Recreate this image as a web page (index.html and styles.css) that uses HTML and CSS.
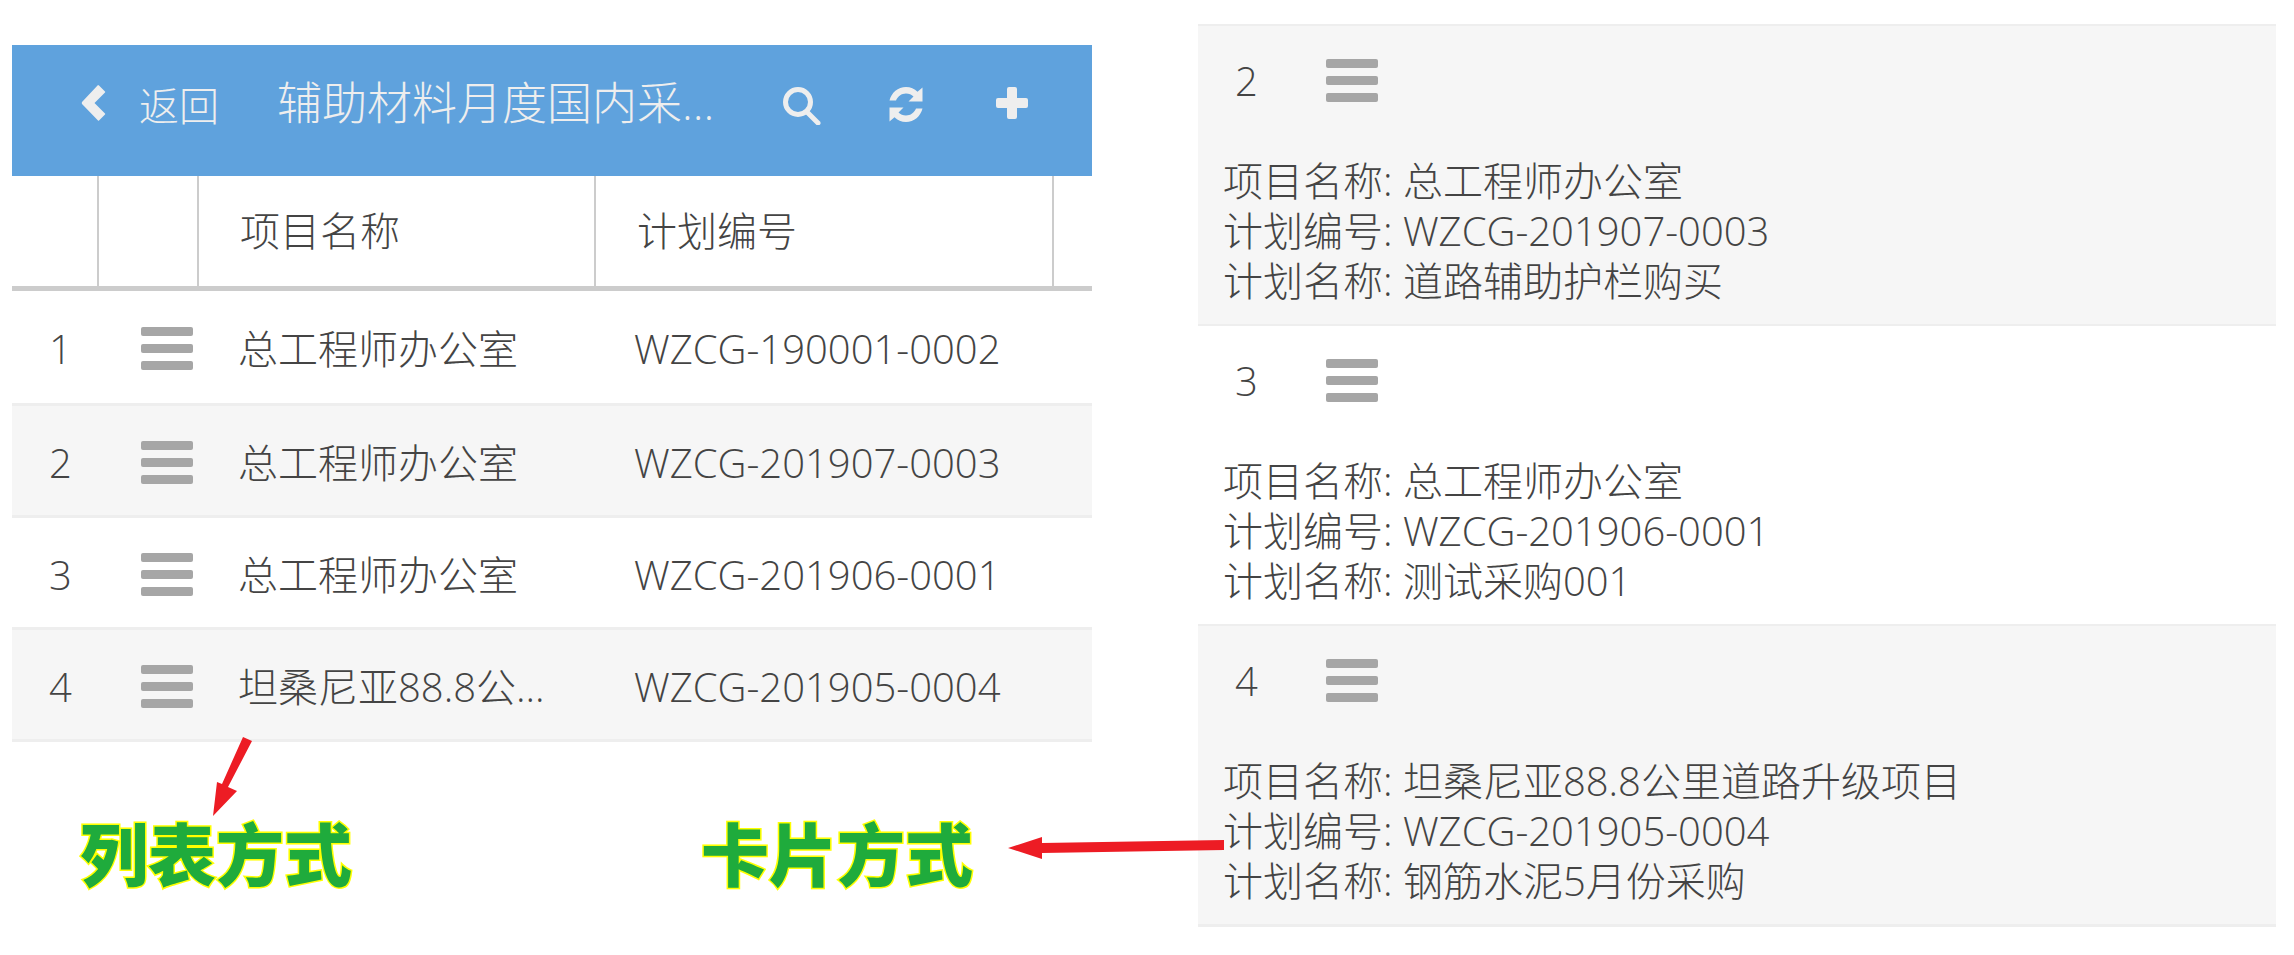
FILE: index.html
```html
<!DOCTYPE html>
<html lang="zh-CN">
<head>
    <meta charset="UTF-8">
    <title>列表方式 卡片方式</title>
    <link rel="stylesheet" href="styles.css">
</head>
<body>

    <div class="page">
        <div class="list-side">
            <div class="top-bar">
                <svg class="icon back-icon" viewBox="0 0 24 36"><path d="M16.5 0 Q17 0 17.5 0.5 L23.5 6.5 Q24 7 23.5 7.5 L13 18 L23.5 28.5 Q24 29 23.5 29.5 L17.5 35.5 Q17 36 16.5 35.5 L0.5 19 Q0 18 0.5 17 Z"/></svg>
                <span class="back-text">返回</span>
                <span class="title">辅助材料月度国内采...</span>
                <svg class="icon search-icon" viewBox="0 0 38 38"><circle cx="15" cy="15" r="12.5"/><path d="M24 25 L35 36"/></svg>
                <svg class="icon refresh-icon" viewBox="0 0 34 35"><path d="M17 0 C21.5 0 25.5 1.8 28.5 4.7 L33.5 0.5 V14.5 H19.5 L24.5 9.5 C22.5 7.6 20 6.5 17 6.5 C12.5 6.5 8.7 9.3 7 13.5 H0.5 C2.3 5.8 9 0 17 0 Z"/><path d="M17 35 C12.5 35 8.5 33.2 5.5 30.3 L0.5 34.5 V20.5 H14.5 L9.5 25.5 C11.5 27.4 14 28.5 17 28.5 C21.5 28.5 25.3 25.7 27 21.5 H33.5 C31.7 29.2 25 35 17 35 Z"/></svg>
                <svg class="icon plus-icon" viewBox="0 0 32 32"><path d="M11 2 Q11 0 13 0 H19 Q21 0 21 2 V11 H30 Q32 11 32 13 V19 Q32 21 30 21 H21 V30 Q21 32 19 32 H13 Q11 32 11 30 V21 H2 Q0 21 0 19 V13 Q0 11 2 11 H11 Z"/></svg>
            </div>

            <div class="table-head">
                <div class="col-num"></div>
                <div class="col-menu"></div>
                <div class="col-name">项目名称</div>
                <div class="col-code">计划编号</div>
                <div class="col-rest"></div>
            </div>

            <div class="row">
                <div class="num">1</div>
                <div class="menu"><i></i><i></i><i></i></div>
                <div class="name">总工程师办公室</div>
                <div class="code">WZCG-190001-0002</div>
            </div>
            <div class="row even">
                <div class="num">2</div>
                <div class="menu"><i></i><i></i><i></i></div>
                <div class="name">总工程师办公室</div>
                <div class="code">WZCG-201907-0003</div>
            </div>
            <div class="row">
                <div class="num">3</div>
                <div class="menu"><i></i><i></i><i></i></div>
                <div class="name">总工程师办公室</div>
                <div class="code">WZCG-201906-0001</div>
            </div>
            <div class="row even">
                <div class="num">4</div>
                <div class="menu"><i></i><i></i><i></i></div>
                <div class="name">坦桑尼亚88.8公...</div>
                <div class="code">WZCG-201905-0004</div>
            </div>

            <div class="labels">
                <span class="label">列表方式</span>
                <span class="label">卡片方式</span>
            </div>
        </div>

        <div class="card-side">
            <div class="card even">
                <div class="card-top">
                    <div class="card-num">2</div>
                    <div class="menu"><i></i><i></i><i></i></div>
                </div>
                <p>项目名称: 总工程师办公室</p>
                <p>计划编号: WZCG-201907-0003</p>
                <p>计划名称: 道路辅助护栏购买</p>
            </div>
            <div class="card">
                <div class="card-top">
                    <div class="card-num">3</div>
                    <div class="menu"><i></i><i></i><i></i></div>
                </div>
                <p>项目名称: 总工程师办公室</p>
                <p>计划编号: WZCG-201906-0001</p>
                <p>计划名称: 测试采购001</p>
            </div>
            <div class="card even">
                <div class="card-top">
                    <div class="card-num">4</div>
                    <div class="menu"><i></i><i></i><i></i></div>
                </div>
                <p>项目名称: 坦桑尼亚88.8公里道路升级项目</p>
                <p>计划编号: WZCG-201905-0004</p>
                <p>计划名称: 钢筋水泥5月份采购</p>
            </div>
        </div>

        <!-- red arrows drawn over the shot -->
        <svg class="arrows" width="2294" height="955" viewBox="0 0 2294 955">
            <polygon points="243,737 252,741 228,787 237,791 213,816 217,782 222,784"/>
            <polygon points="1224,840 1224,850 1042,853 1042,859 1008,848 1042,837 1042,843"/>
        </svg>
    </div>

</body>
</html>
```

FILE: styles.css
```css
body {
    margin: 0;
    background-color: #fff;
    font-family: "Open Sans", "Noto Sans CJK SC", sans-serif;
    font-weight: 300;
    font-size: 40px;
    color: #444;
}

.page {
    display: flex;
    width: 2294px;
    height: 955px;
    overflow: hidden;
}

/* left: list */
.list-side {
    width: 1080px;
    margin: 45px 0 0 12px;
}

.top-bar {
    display: flex;
    align-items: flex-start;
    height: 131px;
    background-color: #5fa2dd;
    color: #eee;
}

.icon {
    fill: #eee;
    flex: none;
}

.back-icon {
    width: 25px;
    height: 36px;
    margin: 40px 0 0 69px;
}

.back-text {
    margin: 36px 0 0 33px;
    line-height: 50px;
}

.title {
    margin: 30px 0 0 58px;
    font-size: 45px;
    line-height: 56px;
    width: 506px;
    white-space: nowrap;
}

.search-icon {
    width: 38px;
    height: 38px;
    margin: 42px 0 0 0;
    fill: none;
    stroke: #eee;
    stroke-width: 5;
    stroke-linecap: round;
}

.refresh-icon {
    width: 34px;
    height: 35px;
    margin: 42px 0 0 68px;
}

.plus-icon {
    width: 32px;
    height: 32px;
    margin: 42px 0 0 73px;
}

.table-head {
    display: flex;
    height: 110px;
    border-bottom: 5px solid #ccc;
}

.table-head div {
    display: flex;
    align-items: center;
    border-right: 2px solid #ccc;
    box-sizing: border-box;
    padding-bottom: 4px;
}

.col-num { width: 87px; }
.col-menu { width: 100px; }
.col-name { width: 397px; padding-left: 41px; }
.col-code { width: 458px; padding-left: 41px; }
.table-head .col-rest { flex: 1; border-right: none; }

.row {
    display: flex;
    align-items: center;
    height: 106px;
    padding-top: 3px;
    border-bottom: 3px solid #eee;
}

.table-head + .row {
    height: 110px;
    padding-top: 2px;
}

.row.even,
.card.even {
    background-color: #f6f6f6;
}

.num {
    width: 87px;
    padding-left: 37px;
    box-sizing: border-box;
}

.menu {
    display: flex;
    flex-direction: column;
    gap: 8px;
    width: 52px;
    flex: none;
}

.menu i {
    display: block;
    height: 9px;
    border-radius: 2px;
    background-color: #a6a6a6;
}

.row .menu {
    margin-left: 42px;
}

.name {
    width: 400px;
    padding: 0 0 2px 45px;
    box-sizing: border-box;
    white-space: nowrap;
}

.code {
    padding: 1px 0 0 41px;
    white-space: nowrap;
}

.labels {
    display: flex;
    gap: 341px;
    margin: 70px 0 0 68px;
}

.label {
    width: 280px;
    white-space: nowrap;
    font-family: "Noto Sans CJK SC", sans-serif;
    font-weight: 900;
    font-size: 68px;
    line-height: 80px;
    color: #1fab3c;
    -webkit-text-stroke: 3px #ff0;
    paint-order: stroke fill;
}

/* right: cards */
.card-side {
    width: 1078px;
    margin: 24px 0 0 106px;
}

.card {
    height: 298px;
    padding-left: 25px;
    border-top: 2px solid #eee;
}

.card:last-child {
    border-bottom: 3px solid #eee;
}

.card-top {
    display: flex;
    align-items: center;
    height: 44px;
    padding: 32px 0 0 1px;
    margin-bottom: 54px;
}

.card-num {
    width: 102px;
    padding-left: 11px;
    box-sizing: border-box;
}

.card p {
    margin: 0;
    line-height: 50px;
    white-space: nowrap;
}

.arrows {
    position: absolute;
    left: 0;
    top: 0;
    fill: #ed1c24;
}
```
